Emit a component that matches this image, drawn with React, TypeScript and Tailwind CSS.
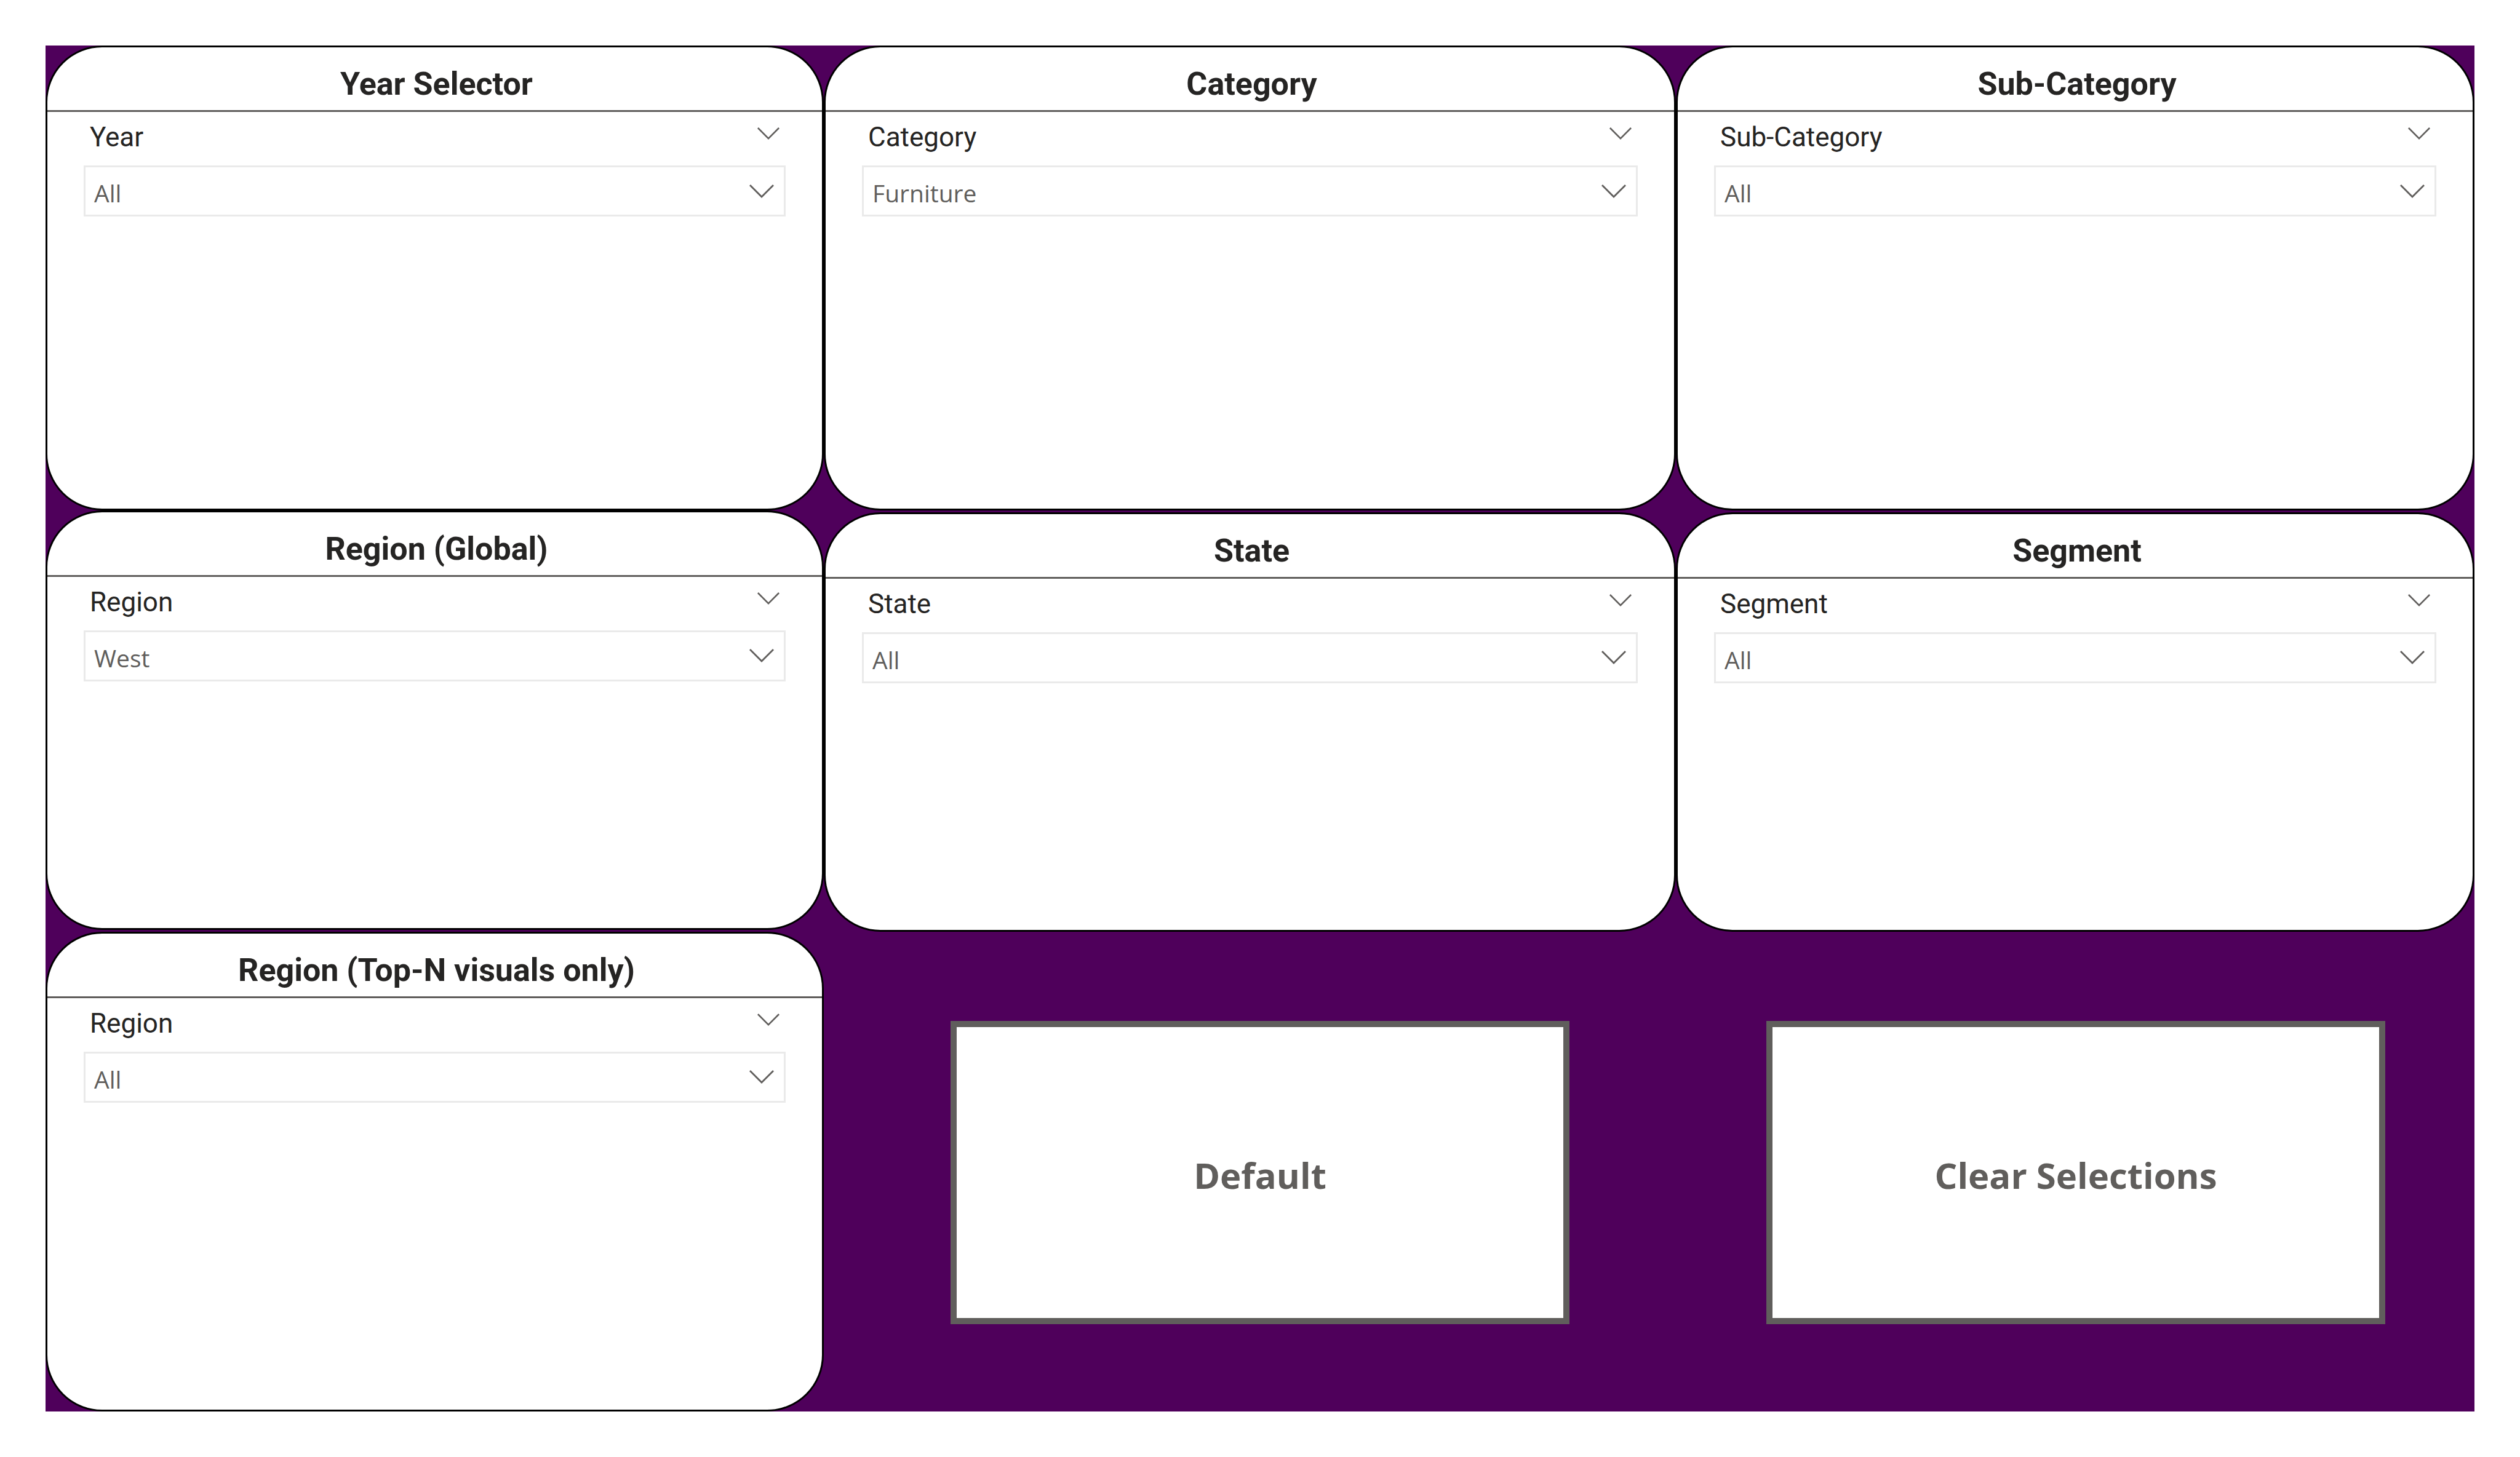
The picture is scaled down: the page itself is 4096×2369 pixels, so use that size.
import { useId, useState } from "react";

type SlicerProps = {
  title: string;
  field: string;
  options: string[];
  initial: string;
  className?: string;
};

function Chevron({ className }: { className: string }) {
  return (
    <svg
      viewBox="0 0 40 22"
      fill="none"
      stroke="#605e5c"
      strokeWidth="2.8"
      className={className}
      aria-hidden="true"
    >
      <path d="M1 1 L20 20 L39 1" />
    </svg>
  );
}

function Slicer({ title, field, options, initial, className = "" }: SlicerProps) {
  const id = useId();
  const [value, setValue] = useState(initial);

  return (
    <section
      className={`min-w-0 overflow-hidden rounded-[92px] border-[3px] border-black bg-white ${className}`}
    >
      <h2 className="border-b-[3px] border-[#605e5c] pt-7 pb-[10px] pl-[6px] text-center text-[52px] leading-[64px] font-bold text-[#252423]">
        {title}
      </h2>
      <div className="px-[59px] pt-[15px]">
        <div className="flex items-start justify-between px-[10px] pb-5">
          <label htmlFor={id} className="text-[44px] leading-[52px] text-[#252423]">
            {field}
          </label>
          <button type="button" aria-label={`${field} options`} className="mt-[10px]">
            <Chevron className="h-5 w-9" />
          </button>
        </div>
        <div className="grid items-center border-[3px] border-[#eaeaea]">
          <select
            id={id}
            value={value}
            onChange={(e) => setValue(e.target.value)}
            className="col-start-1 row-start-1 h-[77px] w-full appearance-none bg-transparent pt-2 pl-[14px] font-['Open_Sans',sans-serif] text-[39px] text-[#605e5c]"
          >
            {options.map((o) => (
              <option key={o}>{o}</option>
            ))}
          </select>
          <Chevron className="pointer-events-none col-start-1 row-start-1 mr-4 h-[22px] w-10 justify-self-end" />
        </div>
      </div>
    </section>
  );
}

function ActionButton({ children }: { children: string }) {
  return (
    <button
      type="button"
      className="flex-1 border-[10px] border-[#605e5c] bg-white pt-2 font-['Open_Sans',sans-serif] text-[58px] font-bold text-[#605e5c]"
    >
      {children}
    </button>
  );
}

export default function App() {
  return (
    <main className="flex min-h-screen bg-white p-[74px] font-['Roboto',sans-serif]">
      <div className="grid flex-1 grid-cols-[1265fr_2683fr] bg-[#4f005b]">
        <div className="flex flex-col">
          <Slicer
            title="Year Selector"
            field="Year"
            options={["All"]}
            initial="All"
            className="flex-[245_1_0%]"
          />
          <Slicer
            title="Region (Global)"
            field="Region"
            options={["All", "West"]}
            initial="West"
            className="mb-[3px] flex-[221_1_0%]"
          />
          <Slicer
            title="Region (Top-N visuals only)"
            field="Region"
            options={["All", "West"]}
            initial="All"
            className="flex-[253_1_0%]"
          />
        </div>
        <div className="grid grid-rows-[467fr_253fr]">
          <div className="grid grid-cols-[1385fr_1298fr] grid-rows-[245fr_221fr] gap-y-[3px]">
            <Slicer
              title="Category"
              field="Category"
              options={["All", "Furniture"]}
              initial="Furniture"
            />
            <Slicer title="Sub-Category" field="Sub-Category" options={["All"]} initial="All" />
            <Slicer title="State" field="State" options={["All"]} initial="All" />
            <Slicer title="Segment" field="Segment" options={["All"]} initial="All" />
          </div>
          <div className="flex gap-[320px] pt-[145px] pr-[145px] pb-[142px] pl-[206px]">
            <ActionButton>Default</ActionButton>
            <ActionButton>Clear Selections</ActionButton>
          </div>
        </div>
      </div>
    </main>
  );
}
